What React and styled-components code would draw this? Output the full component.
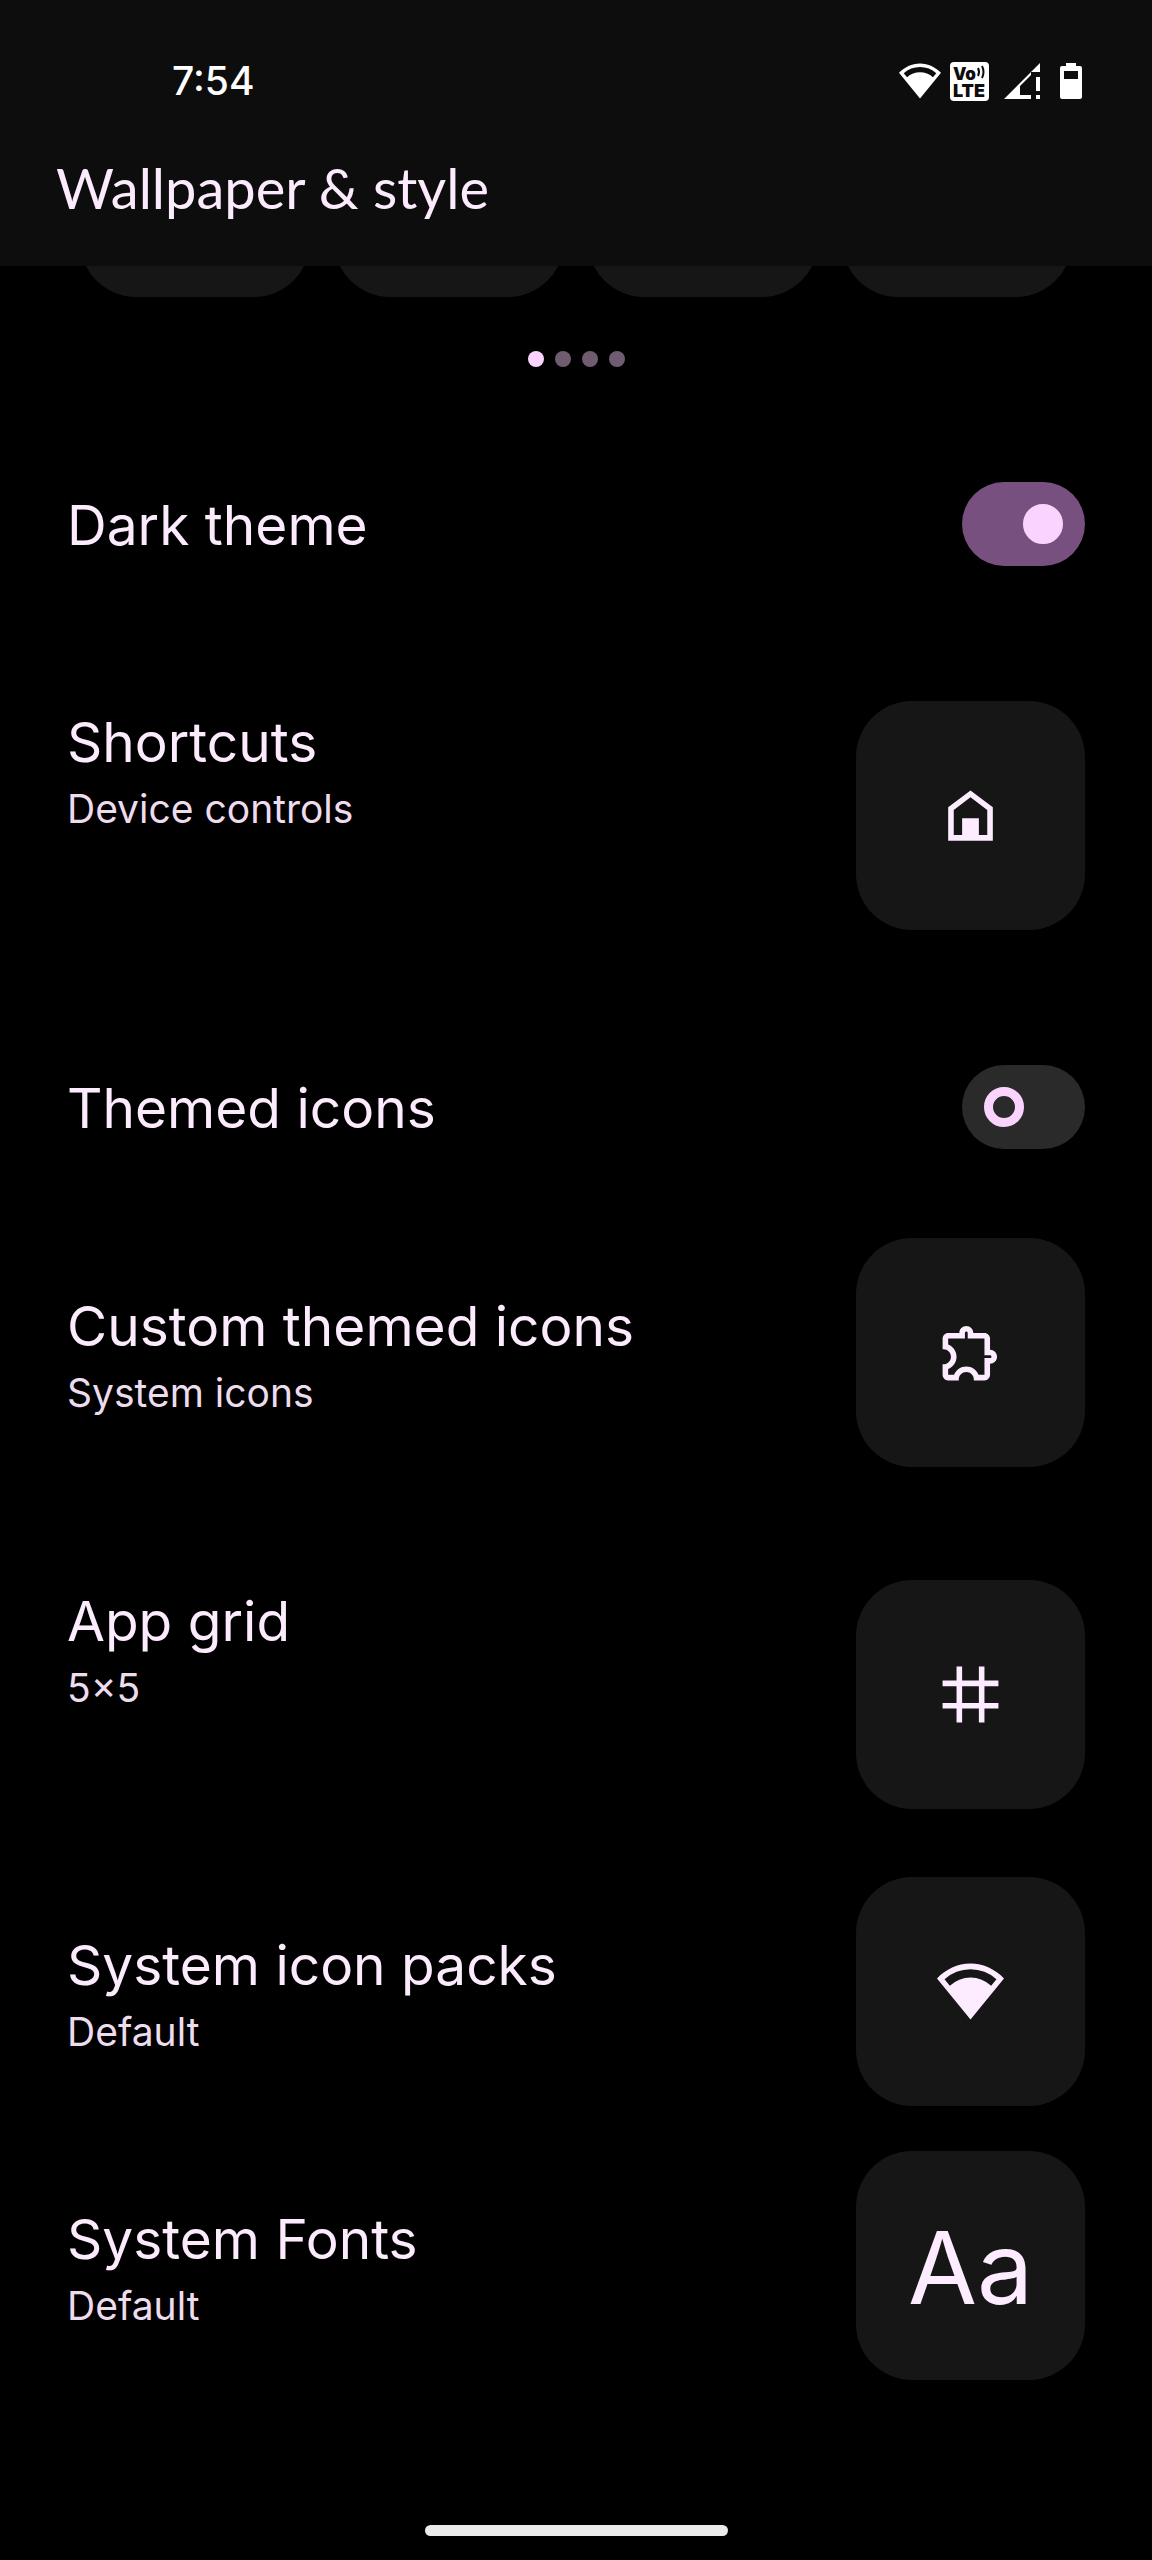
import { useState } from 'react';
import styled, { createGlobalStyle } from 'styled-components';

const GlobalStyle = createGlobalStyle`
  *,
  *::before {
    box-sizing: border-box;
  }

  body {
    margin: 0;
    background-color: #000000;
    color: #fbebfc;
    font-family: Inter, 'Liberation Sans', sans-serif;
  }
`;

export default function App() {
  const [darkTheme, setDarkTheme] = useState(true);
  const [themedIcons, setThemedIcons] = useState(false);

  return (
    <Page>
      <GlobalStyle />
      <Header>
        <StatusBar>
          <Time>7:54</Time>
          <StatusIcons>
            <WifiIcon size={42} />
            <VolteIcon />
            <SignalIcon />
            <BatteryIcon />
          </StatusIcons>
        </StatusBar>
        <Title>Wallpaper &amp; style</Title>
      </Header>

      <Palettes>
        <Palette />
        <Palette />
        <Palette />
        <Palette />
      </Palettes>
      <Dots>
        <Dot $active />
        <Dot />
        <Dot />
        <Dot />
      </Dots>

      <Settings>
        <SwitchRow label="Dark theme" checked={darkTheme} onChange={setDarkTheme} space={115} />
        <TileRow title="Shortcuts" subtitle="Device controls" space={135} top>
          <HomeIcon />
        </TileRow>
        <SwitchRow label="Themed icons" checked={themedIcons} onChange={setThemedIcons} space={135} />
        <TileRow title="Custom themed icons" subtitle="System icons" space={89}>
          <PuzzleIcon />
        </TileRow>
        <TileRow title="App grid" subtitle="5×5" space={113} top>
          <GridIcon />
        </TileRow>
        <TileRow title="System icon packs" subtitle="Default" space={68}>
          <WifiIcon size={67} />
        </TileRow>
        <TileRow title="System Fonts" subtitle="Default" space={45}>
          <FontSample>Aa</FontSample>
        </TileRow>
      </Settings>

      <HomeBar />
    </Page>
  );
}

function SwitchRow({ label, checked, onChange, space }) {
  return (
    <SwitchLabel $space={space}>
      <Name>{label}</Name>
      <Switch type="checkbox" role="switch" checked={checked} onChange={(e) => onChange(e.target.checked)} />
    </SwitchLabel>
  );
}

function TileRow({ title, subtitle, space, top, children }) {
  return (
    <Row $space={space} $top={top}>
      <Texts $top={top}>
        <Name>{title}</Name>
        <Summary>{subtitle}</Summary>
      </Texts>
      <Tile type="button" aria-label={title}>
        {children}
      </Tile>
    </Row>
  );
}

function WifiIcon({ size }) {
  return (
    <svg width={size} height={size} viewBox="0 0 24 24" fill="currentColor">
      <path
        fillRule="evenodd"
        d="M12 2C7.3 2 3.2 4.1 0 7.3L12 22 24 7.3C20.8 4.1 16.7 2 12 2zM2.7 7.6a13.8 13.8 0 0 1 18.6 0l-1.9 2.3a10.9 10.9 0 0 0-14.8 0z"
      />
    </svg>
  );
}

function VolteIcon() {
  return (
    <svg width="39" height="39" viewBox="0 0 39 39">
      <rect width="39" height="39" rx="4" fill="#ffffff" />
      <g fill="#0d0d0d" fontFamily="Inter, sans-serif" fontWeight="900">
        <text x="3" y="18" fontSize="17">
          Vo
        </text>
        <text x="3" y="35" fontSize="18">
          LTE
        </text>
      </g>
      <g fill="none" stroke="#0d0d0d" strokeWidth="2">
        <path d="M28 6q2 4 0 8" />
        <path d="M32 4q3 6 0 12" />
      </g>
    </svg>
  );
}

function SignalIcon() {
  return (
    <svg width="36" height="36" viewBox="0 0 36 36" fill="#ffffff">
      <path d="M36 0v9h-9v3L16 23v9h11v4H0z" />
      <path d="M32 14h4v14h-4zM32 32h4v4h-4z" />
    </svg>
  );
}

function BatteryIcon() {
  return (
    <svg width="22" height="36" viewBox="0 0 22 36" fill="#ffffff">
      <path fillRule="evenodd" d="M6 0h10v3h4a2 2 0 0 1 2 2v29a2 2 0 0 1-2 2H2a2 2 0 0 1-2-2V5a2 2 0 0 1 2-2h4zM4 8v8h14V8z" />
    </svg>
  );
}

function HomeIcon() {
  return (
    <svg width="67" height="67" viewBox="0 0 24 24" fill="currentColor">
      <path fillRule="evenodd" d="M12 3l8 6v12H4V9zM6 19h3v-6h6v6h3v-9l-6-4.5L6 10z" />
    </svg>
  );
}

function PuzzleIcon() {
  return (
    <svg width="67" height="67" viewBox="0 0 24 24" fill="currentColor">
      <path d="M10.5 4.5c.28 0 .5.22.5.5v2h6v6h2c.28 0 .5.22.5.5s-.22.5-.5.5h-2v6h-2.12c-.68-1.75-2.39-3-4.38-3s-3.7 1.25-4.38 3H4v-2.12c1.75-.68 3-2.39 3-4.38 0-1.99-1.24-3.7-2.99-4.38L4 7h6V5c0-.28.22-.5.5-.5m0-2C9.12 2.5 8 3.62 8 5H4c-1.1 0-1.99.9-1.99 2v3.8h.29c1.49 0 2.7 1.21 2.7 2.7s-1.21 2.7-2.7 2.7H2V20c0 1.1.9 2 2 2h3.8v-.3c0-1.49 1.21-2.7 2.7-2.7s2.7 1.21 2.7 2.7v.3H17c1.1 0 2-.9 2-2v-4c1.38 0 2.5-1.12 2.5-2.5S20.38 11 19 11V7c0-1.1-.9-2-2-2h-4c0-1.38-1.12-2.5-2.5-2.5z" />
    </svg>
  );
}

function GridIcon() {
  return (
    <svg width="67" height="67" viewBox="0 0 24 24" fill="none" stroke="currentColor" strokeWidth="2">
      <path d="M8 2v20M16 2v20M2 8h20M2 16h20" />
    </svg>
  );
}

const Page = styled.main`
  display: flex;
  flex-direction: column;
  min-height: 100vh;
`;

const Header = styled.header`
  padding: 56px 56px 46px;
  background-color: #0d0d0d;
`;

const StatusBar = styled.div`
  display: flex;
  align-items: center;
  justify-content: space-between;
  height: 50px;
  padding: 0 14px 0 116px;
  color: #ffffff;
`;

const Time = styled.span`
  font-size: 39px;
  font-weight: 500;
  line-height: 50px;
`;

const StatusIcons = styled.div`
  display: flex;
  align-items: center;
  gap: 9px;

  svg:nth-child(n + 3) {
    margin-left: 6px;
  }

  svg:last-child {
    margin-left: 11px;
  }
`;

const Title = styled.h1`
  margin: 50px 0 0;
  font-family: Lato, sans-serif;
  font-size: 56px;
  font-weight: 400;
  line-height: 64px;
`;

const Palettes = styled.div`
  display: grid;
  grid-template-columns: repeat(4, 1fr);
  gap: 24px;
  align-content: end;
  height: 31px;
  padding: 0 80px;
  overflow: hidden;
`;

const Palette = styled.div`
  height: 229px;
  border-radius: 56px;
  background-color: #161616;
`;

const Dots = styled.div`
  display: flex;
  justify-content: center;
  gap: 11px;
  margin-top: 54px;
`;

const Dot = styled.span`
  width: 16px;
  height: 16px;
  border-radius: 50%;
  background-color: ${(props) => (props.$active ? '#fad4ff' : '#6f5c70')};
`;

const Settings = styled.section`
  padding: 0 67px;
`;

const Row = styled.div`
  display: flex;
  align-items: ${(props) => (props.$top ? 'flex-start' : 'center')};
  justify-content: space-between;
  margin-top: ${(props) => props.$space}px;
`;

const SwitchLabel = styled(Row).attrs({ as: 'label' })`
  cursor: pointer;
`;

const Texts = styled.div`
  padding-top: ${(props) => (props.$top ? '2px' : '0')};
`;

const Name = styled.div`
  padding-top: 1px;
  font-size: 55px;
  line-height: 76px;
`;

const Summary = styled.div`
  margin-top: 4px;
  color: #eddcee;
  font-size: 39px;
  line-height: 50px;
`;

const Switch = styled.input`
  display: flex;
  align-items: center;
  width: 123px;
  height: 84px;
  margin: 0;
  padding: 0 22px;
  border-radius: 42px;
  background-color: #2a2a2a;
  appearance: none;
  cursor: pointer;

  &::before {
    content: '';
    width: 40px;
    height: 40px;
    border: 9px solid #fad4ff;
    border-radius: 50%;
  }

  &:checked {
    justify-content: flex-end;
    background-color: #78507f;
  }

  &:checked::before {
    background-color: #fad4ff;
  }
`;

const Tile = styled.button`
  display: flex;
  flex-shrink: 0;
  align-items: center;
  justify-content: center;
  width: 229px;
  height: 229px;
  padding: 0;
  border: none;
  border-radius: 56px;
  background-color: #161616;
  color: #fdebff;
  font-family: inherit;
  cursor: pointer;
`;

const FontSample = styled.span`
  padding-top: 4px;
  font-size: 100px;
  line-height: 120px;
`;

const HomeBar = styled.div`
  width: 303px;
  height: 11px;
  margin: auto auto 24px;
  border-radius: 6px;
  background-color: #ebebeb;
`;
